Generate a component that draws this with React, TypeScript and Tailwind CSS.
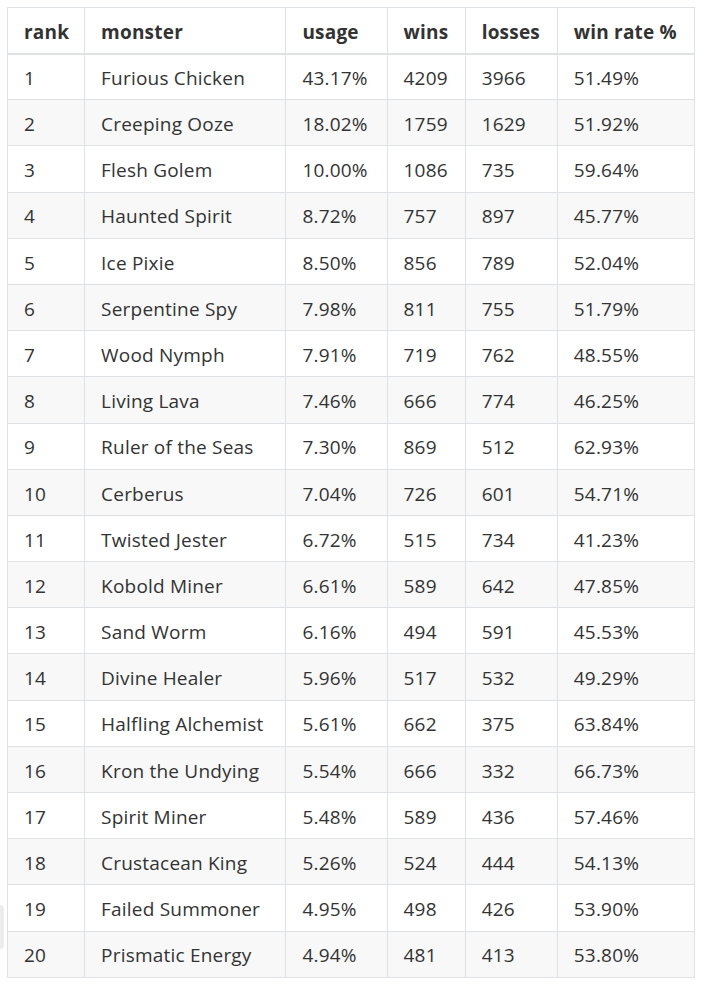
import React from "react";

const rows: [number, string, string, number, number, string][] = [
  [1, "Furious Chicken", "43.17%", 4209, 3966, "51.49%"],
  [2, "Creeping Ooze", "18.02%", 1759, 1629, "51.92%"],
  [3, "Flesh Golem", "10.00%", 1086, 735, "59.64%"],
  [4, "Haunted Spirit", "8.72%", 757, 897, "45.77%"],
  [5, "Ice Pixie", "8.50%", 856, 789, "52.04%"],
  [6, "Serpentine Spy", "7.98%", 811, 755, "51.79%"],
  [7, "Wood Nymph", "7.91%", 719, 762, "48.55%"],
  [8, "Living Lava", "7.46%", 666, 774, "46.25%"],
  [9, "Ruler of the Seas", "7.30%", 869, 512, "62.93%"],
  [10, "Cerberus", "7.04%", 726, 601, "54.71%"],
  [11, "Twisted Jester", "6.72%", 515, 734, "41.23%"],
  [12, "Kobold Miner", "6.61%", 589, 642, "47.85%"],
  [13, "Sand Worm", "6.16%", 494, 591, "45.53%"],
  [14, "Divine Healer", "5.96%", 517, 532, "49.29%"],
  [15, "Halfling Alchemist", "5.61%", 662, 375, "63.84%"],
  [16, "Kron the Undying", "5.54%", 666, 332, "66.73%"],
  [17, "Spirit Miner", "5.48%", 589, 436, "57.46%"],
  [18, "Crustacean King", "5.26%", 524, 444, "54.13%"],
  [19, "Failed Summoner", "4.95%", 498, 426, "53.90%"],
  [20, "Prismatic Energy", "4.94%", 481, 413, "53.80%"],
];

const headers = ["rank", "monster", "usage", "wins", "losses", "win rate %"];
const widths = ["w-[77px]", "w-[201px]", "w-[101px]", "w-[78px]", "w-[92px]", "w-[137px]"];

export default function App() {
  return (
    <div className="relative min-h-screen bg-white pt-[7px] pl-[7px] font-['Open_Sans',sans-serif] text-[#333]">
      <div className="absolute left-0 top-[905px] h-[44px] w-[4px] rounded-r bg-[#ececec]" />
      <table className="w-[688px] table-fixed border-collapse text-[19px] tracking-[0.2px]">
        <thead>
          <tr className="h-[46px]">
            {headers.map((h, i) => (
              <th
                key={h}
                className={`${widths[i]} border border-b-2 border-[#dfe2e5] px-4 pt-[3px] text-left font-bold`}
              >
                {h}
              </th>
            ))}
          </tr>
        </thead>
        <tbody>
          {rows.map((r, idx) => (
            <tr key={r[0]} className={`h-[46.2px] ${idx % 2 === 1 ? "bg-[#f8f8f8]" : "bg-white"}`}>
              {r.map((c, i) => (
                <td key={i} className="border border-[#dfe2e5] px-4 pt-[3px]">
                  {c}
                </td>
              ))}
            </tr>
          ))}
        </tbody>
      </table>
    </div>
  );
}
